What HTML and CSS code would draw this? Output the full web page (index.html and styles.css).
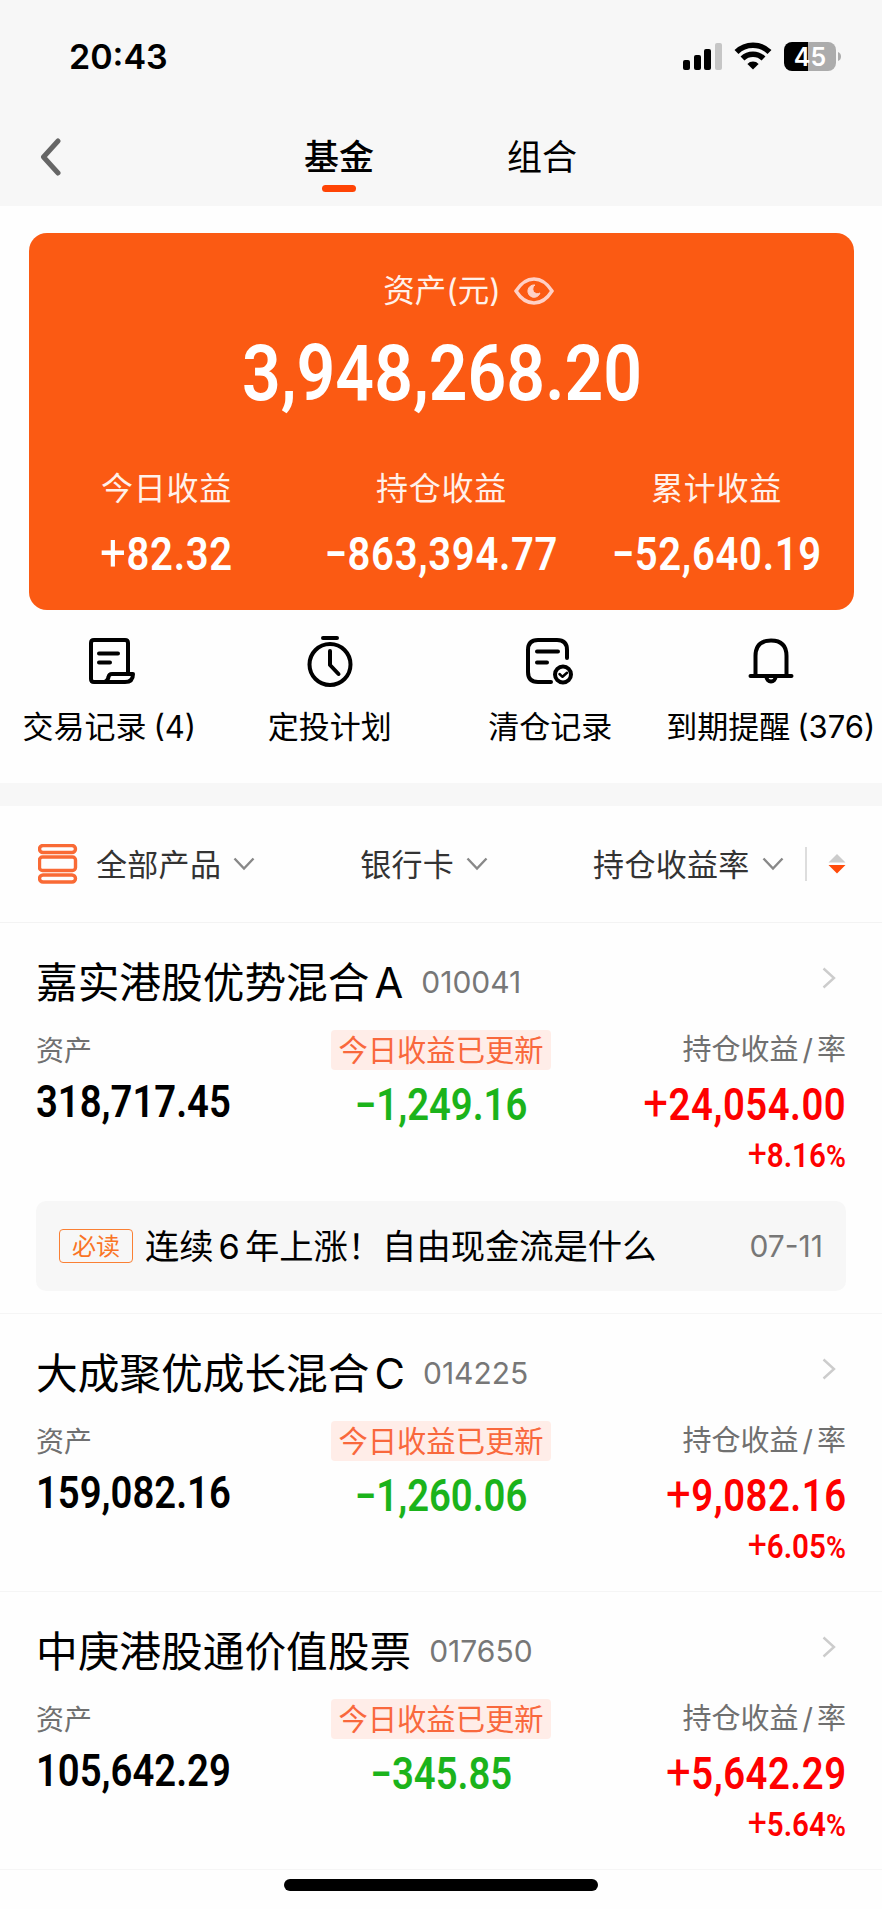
FILE: index.html
```html
<!DOCTYPE html>
<html lang="zh-cn">
<head>
	<meta charset="UTF-8" />
	<title>基金</title>
	<link rel="stylesheet" href="styles.css">
</head>
<body>
	<div class="page">
		<header class="header">
			<div class="statusBar">
				<span class="time">20:43</span>
				<div class="statusIcons">
					<svg class="signal" width="39" height="27" viewBox="0 0 39 27">
						<rect x="0" y="17" width="7" height="10" rx="2" />
						<rect x="11" y="12" width="7" height="15" rx="2" />
						<rect x="21" y="6" width="7" height="21" rx="2" />
						<rect x="32" y="0" width="7" height="27" rx="2" fill="#c6c6c6" />
					</svg>
					<svg class="wifi" width="38" height="28" viewBox="0 0 38 28">
						<path d="M2.500 10a23.500 23.500 0 0 1 33 0M8.500 16.500a15 15 0 0 1 21 0" fill="none" stroke="#000" stroke-width="5.6" />
						<path d="M19 27.500l-5.600-5.600a8 8 0 0 1 11.200 0z" />
					</svg>
					<div class="battery"><span class="level">45</span></div>
					<svg width="3" height="9" viewBox="0 0 3 9"><path d="M0 0q3 1 3 4.500t-3 4.500z" fill="#acacac" /></svg>
				</div>
			</div>
			<nav class="nav">
				<svg class="back" width="21" height="38" viewBox="0 0 21 38"><path d="M18 3L3.500 19L18 35" /></svg>
				<a class="tab active">基金</a>
				<a class="tab">组合</a>
			</nav>
		</header>

		<section class="card">
			<div class="cardTitle">
				<span>资产(元)</span>
				<svg width="40" height="28" viewBox="0 0 40 28">
					<path d="M2 14C7 6 13 2 20 2s13 4 18 12c-5 8-11 12-18 12S7 22 2 14z" fill="none" stroke="#ffd0c6" stroke-width="3.4" />
					<path d="M21 8a6.200 6.200 0 1 0 5 8a4.300 4.300 0 0 1-5-8z" fill="#ffd0c6" stroke="#ffd0c6" stroke-linejoin="round" />
				</svg>
			</div>
			<div class="total"><span class="num">3,948,268.20</span></div>
			<ul class="stats">
				<li><p>今日收益</p><span class="num"><b>+</b>82.32</span></li>
				<li><p>持仓收益</p><span class="num">−863,394.77</span></li>
				<li><p>累计收益</p><span class="num">−52,640.19</span></li>
			</ul>
		</section>

		<ul class="menu">
			<li>
				<svg class="record" width="52" height="52" viewBox="0 0 52 52">
					<path d="M42 37V8q0-3-3-3H8Q5 5 5 8v36q0 3 3 3h31q8 0 8-8h-21q-3 0-3.500 3q-1 5-5 5M13 18.500h19M13 27.500h11" />
				</svg>
				<p>交易记录<span class="count">(4)</span></p>
			</li>
			<li>
				<svg width="52" height="52" viewBox="0 0 52 52">
					<path d="M19 3h14M26 16v14l8.500 9" />
					<circle cx="26" cy="29.500" r="20.500" />
				</svg>
				<p>定投计划</p>
			</li>
			<li>
				<svg width="52" height="52" viewBox="0 0 52 52">
					<path d="M43 23V15q0-10-10-10H14Q4 5 4 15v22q0 10 10 10h13M13 16.500h21M13 27.500h10" />
					<circle cx="39" cy="39.500" r="8" />
					<path d="M35.500 39l3 2.800l4.500-4" stroke-width="2.500" />
				</svg>
				<p>清仓记录</p>
			</li>
			<li>
				<svg width="52" height="52" viewBox="0 0 52 52">
					<path d="M10.500 40V21q0-15.500 15.500-15.500T41.500 21v19M5.500 41h41M21.500 42a4.500 4.500 0 0 0 9 0" />
				</svg>
				<p>到期提醒<span class="count">(376)</span></p>
			</li>
		</ul>

		<div class="filter">
			<svg class="all" width="40" height="40" viewBox="0 0 40 40">
				<rect x="1.500" y="1.500" width="36" height="7" rx="3.500" />
				<rect x="1.500" y="13" width="36" height="13.500" rx="3" />
				<rect x="1.500" y="31" width="36" height="7" rx="3.500" />
			</svg>
			<span class="product">全部产品</span>
			<svg class="down" width="22" height="14" viewBox="0 0 22 14"><path d="M1.500 1.500L11 11.500L20.500 1.500" /></svg>
			<span class="bank">银行卡</span>
			<svg class="down" width="22" height="14" viewBox="0 0 22 14"><path d="M1.500 1.500L11 11.500L20.500 1.500" /></svg>
			<span class="rate">持仓收益率</span>
			<svg class="down" width="22" height="14" viewBox="0 0 22 14"><path d="M1.500 1.500L11 11.500L20.500 1.500" /></svg>
			<svg class="sort" width="18" height="20" viewBox="0 0 18 20">
				<path d="M.5 8.500L9 0l8.500 8.500z" fill="#ccc" />
				<path d="M.5 11h17l-8.500 8.500z" fill="#ff4a0a" />
			</svg>
		</div>

		<ul class="funds">
			<li class="fund hasNotice">
				<div class="name">
					<h3>嘉实港股优势混合<span>A</span></h3><em>010041</em>
					<svg width="14" height="22" viewBox="0 0 14 22"><path d="M1.500 1.500L12 11L1.500 20.500" /></svg>
				</div>
				<div class="labels"><span>资产</span><span class="tag">今日收益已更新</span><span>持仓收益<i>/</i>率</span></div>
				<div class="values">
					<span class="num asset">318,717.45</span>
					<span class="num down">−1,249.16</span>
					<span class="num up"><b>+</b>24,054.00</span>
				</div>
				<div class="percent"><span class="num"><b>+</b>8.16<small>%</small></span></div>
				<div class="notice">
					<span class="badge">必读</span>
					<p>连续<span>6</span>年上涨！自由现金流是什么</p>
					<time>07-11</time>
				</div>
			</li>
			<li class="fund">
				<div class="name">
					<h3>大成聚优成长混合<span>C</span></h3><em>014225</em>
					<svg width="14" height="22" viewBox="0 0 14 22"><path d="M1.500 1.500L12 11L1.500 20.500" /></svg>
				</div>
				<div class="labels"><span>资产</span><span class="tag">今日收益已更新</span><span>持仓收益<i>/</i>率</span></div>
				<div class="values">
					<span class="num asset">159,082.16</span>
					<span class="num down">−1,260.06</span>
					<span class="num up"><b>+</b>9,082.16</span>
				</div>
				<div class="percent"><span class="num"><b>+</b>6.05<small>%</small></span></div>
			</li>
			<li class="fund">
				<div class="name">
					<h3>中庚港股通价值股票</h3><em>017650</em>
					<svg width="14" height="22" viewBox="0 0 14 22"><path d="M1.500 1.500L12 11L1.500 20.500" /></svg>
				</div>
				<div class="labels"><span>资产</span><span class="tag">今日收益已更新</span><span>持仓收益<i>/</i>率</span></div>
				<div class="values">
					<span class="num asset">105,642.29</span>
					<span class="num down">−345.85</span>
					<span class="num up"><b>+</b>5,642.29</span>
				</div>
				<div class="percent"><span class="num"><b>+</b>5.64<small>%</small></span></div>
			</li>
		</ul>
		<div class="homeBar"></div>
	</div>
</body>
</html>
```
FILE: styles.css
```css
*{
	margin: 0;padding: 0;
	box-sizing: border-box;
}
body{
	background: #fefefe;
	color: #000;
	font-family: Inter,"Noto Sans CJK SC",sans-serif;
}
.page{
	width: 882px;height: 1909px;
	overflow: hidden;
}
li{
	list-style-type: none;
}
em,i{
	font-style: normal;
}
svg{
	display: block;
	flex: none;
}
/* 数字统一用窄体 */
.num{
	display: inline-block;
	font-family: Roboto,"Noto Sans CJK SC",sans-serif;
	font-weight: 560;
	white-space: nowrap;
	transform: scaleX(.87);
}
.num b{
	font-size: 1.14em;
	font-weight: 400;
	line-height: 1px;
}

/* 顶部 */
.header{
	height: 206px;
	background: #f7f7f7;
}
.statusBar{
	display: flex;
	justify-content: space-between;
	height: 112px;
	padding: 0 41px 0 69px;
}
.time{
	line-height: 114px;
	font-size: 34px;
	font-weight: 600;
}
.statusIcons{
	display: flex;
	align-items: center;
	height: 112px;
}
.wifi{
	margin: 0 12px 0 12px;
}
.battery{
	width: 52px;height: 29px;
	margin-right: 2px;
	border-radius: 8px;
	background: linear-gradient(to right,#000 24px,#acacac 24px);
	color: #fff;
	text-align: center;
}
.level{
	display: block;
	line-height: 30px;
	font-size: 25px;
	font-weight: 600;
}
.nav{
	display: flex;
	height: 94px;
	padding-left: 40px;
}
.back{
	margin-top: 26px;
}
.back path{
	fill: none;
	stroke: #666;
	stroke-width: 5;
	stroke-linecap: round;
	stroke-linejoin: round;
}
.tab{
	display: flex;
	flex-direction: column;
	align-items: center;
	width: 70px;
	margin-left: 133px;
	padding-top: 20px;
	line-height: 50px;
	font-size: 35px;
	white-space: nowrap;
}
.back + .tab{
	margin-left: 243px;
}
.active{
	font-weight: 500;
}
.active:after{
	content: "";
	width: 34px;height: 7px;
	margin-top: 3px;
	border-radius: 4px;
	background: #ff4405;
}

/* 资产卡片 */
.card{
	width: 825px;height: 377px;
	margin: 27px 0 0 29px;
	padding-top: 34px;
	border-radius: 18px;
	background: #fb5a13;
	color: #fff;
	text-align: center;
}
.cardTitle{
	display: flex;
	justify-content: center;
	align-items: center;
	gap: 13px;
	padding-left: 54px;
	line-height: 48px;
	font-size: 31.5px;
	color: #fff1ea;
}
.total{
	height: 115px;
	line-height: 114px;
	font-size: 78px;
}
.stats{
	display: grid;
	grid-template-columns: repeat(3,1fr);
	padding-top: 34px;
}
.stats p{
	line-height: 50px;
	font-size: 32px;
	letter-spacing: .8px;
	color: #fff1ea;
}
.stats .num{
	margin: 0 -20px;
	line-height: 80px;
	font-size: 46px;
	letter-spacing: .8px;
}

/* 功能入口 */
.menu{
	display: grid;
	grid-template-columns: repeat(4,1fr);
	height: 173px;
	margin-left: -1px;
	padding: 25px 1px 0 0;
}
.menu li{
	display: flex;
	flex-direction: column;
	align-items: center;
}
.menu svg{
	fill: none;
	stroke: #000;
	stroke-width: 4;
	stroke-linecap: round;
	stroke-linejoin: round;
}
.menu .record{
	margin-left: 5px;
}
.menu p{
	margin-top: 15px;
	line-height: 50px;
	font-size: 31px;
	white-space: nowrap;
}
.count{
	margin-left: 7px;
}

/* 筛选 */
.filter{
	display: flex;
	align-items: center;
	height: 140px;
	padding: 0 36px 0 38px;
	border-top: 23px solid #f7f7f7;
	border-bottom: 1px solid #f3f3f3;
	line-height: 50px;
	font-size: 31px;
	color: #333;
}
.filter span{
	margin-top: 2px;
}
.all{
	fill: none;
	stroke: #f96a35;
	stroke-width: 3.4;
}
.product{
	margin-left: 18px;
	letter-spacing: .3px;
}
.filter .down{
	margin-left: 12px;
	fill: none;
	stroke: #888;
	stroke-width: 2.4;
}
.bank,.rate{
	margin-left: 105px;
	letter-spacing: .3px;
}
.sort{
	width: 41px;height: 34px;
	margin-left: auto;
	padding: 7px 0 7px 21px;
	border-left: 2px solid #ddd;
}

/* 基金列表 */
.fund{
	height: 278px;
	padding: 28px 36px 0;
	border-bottom: 1px solid #f5f5f5;
}
.hasNotice{
	height: 391px;
}
.name{
	display: flex;
	align-items: center;
	height: 58px;
}
.name h3{
	font-size: 41.7px;
	font-weight: 400;
}
.name h3 span{
	margin-left: 5px;
}
.name em{
	margin: 3px 0 0 18px;
	font-size: 30px;
	color: #777;
}
.name svg{
	margin: -5px 10px 0 auto;
	fill: none;
	stroke: #ccc;
	stroke-width: 2.4;
}
.labels,.values{
	display: grid;
	grid-template-columns: 1fr auto 1fr;
	align-items: center;
}
.labels{
	height: 40px;
	margin-top: 21px;
	font-size: 29px;
	line-height: 36px;
	color: #707070;
}
.labels i{
	margin: 0 4px;
}
.labels span:last-child,.percent{
	text-align: right;
}
.labels span:last-child{
	margin-top: -1px;
}
.labels span:first-child{
	margin-top: 2px;
	font-size: 28px;
}
.labels .tag{
	height: 40px;
	padding: 0 7px;
	line-height: 42px;
	font-size: 29.3px;
	border-radius: 4px;
	background: #ffede8;
	color: #f9683c;
}
.values{
	height: 66px;
	font-size: 44px;
}
.values .asset{
	justify-self: start;
	margin-top: -3px;
	transform-origin: left;
}
.values .down{
	margin-top: 3px;
	color: #1bb31b;
}
.values .up{
	justify-self: end;
	margin-top: 3px;
	letter-spacing: .6px;
	margin-right: -.6px;
	transform-origin: right;
}
.values .up,.percent{
	color: #fe0000;
}
.percent{
	height: 40px;
	line-height: 37px;
	font-size: 34px;
}
.percent .num{
	transform-origin: right;
}
.percent small{
	font-size: 31px;
}
.notice{
	display: flex;
	align-items: center;
	height: 90px;
	margin-top: 25px;
	padding: 0 23px;
	border-radius: 10px;
	background: #f7f7f7;
	font-size: 34.300px;
}
.badge{
	width: 74px;height: 34px;
	margin-right: 12px;
	border: 1.500px solid #fa8034;
	border-radius: 4px;
	line-height: 33px;
	font-size: 24px;
	text-align: center;
	color: #fa7426;
}
.notice p{
	margin-top: -5px;
}
.notice p span{
	margin: 0 5px;
}
.notice time{
	margin: -1px 0 0 auto;
	font-size: 30px;
	color: #777;
}
.homeBar{
	width: 314px;height: 12px;
	margin: 9px auto 0;
	border-radius: 6px;
	background: #000;
}
```
